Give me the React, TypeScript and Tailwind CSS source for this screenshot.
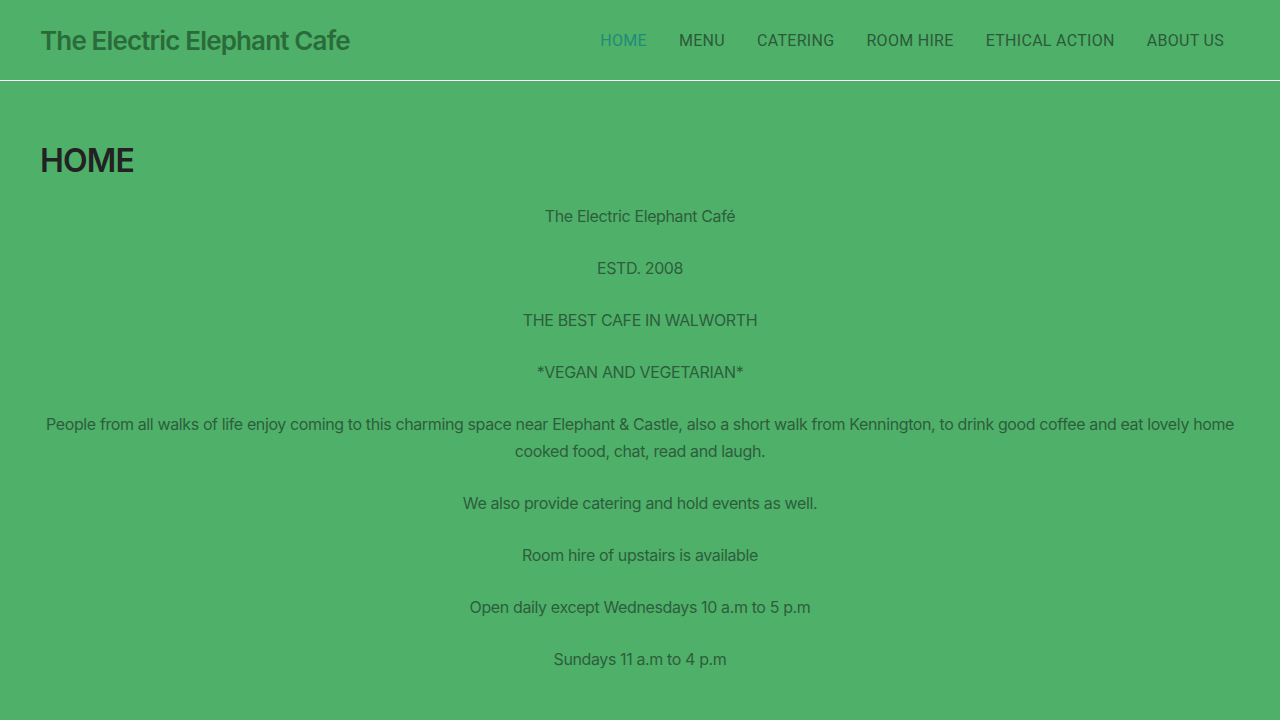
export default function App() {
  const nav = ["HOME", "MENU", "CATERING", "ROOM HIRE", "ETHICAL ACTION", "ABOUT US"];
  const paras = [
    "The Electric Elephant Café",
    "ESTD. 2008",
    "THE BEST CAFE IN WALWORTH",
    "*VEGAN AND VEGETARIAN*",
    "People from all walks of life enjoy coming to this charming space near Elephant & Castle, also a short walk from Kennington, to drink good coffee and eat lovely home cooked food, chat, read and laugh.",
    "We also provide catering and hold events as well.",
    "Room hire of upstairs is available",
    "Open daily except Wednesdays 10 a.m to 5 p.m",
    "Sundays 11 a.m to 4 p.m",
  ];
  return (
    <div className="min-h-[720px] bg-[#4fb06a]" style={{ fontFamily: "Inter, 'Noto Sans', sans-serif" }}>
      <header className="h-[81px] border-b border-white flex items-center justify-between pl-10 pr-10">
        <div className="text-[26px] font-semibold text-[#2a6b3a] tracking-[-0.85px]">The Electric Elephant Cafe</div>
        <nav className="flex items-center pt-[2px]">
          {nav.map((n, i) => (
            <a
              key={n}
              className={`px-4 text-[16px] tracking-[0.3px] ${i === 0 ? "text-[#1f8a78]" : "text-[#2b5a38]"}`}
              style={{ fontFamily: "Roboto, sans-serif" }}
            >
              {n}
            </a>
          ))}
        </nav>
      </header>
      <main className="px-10 pt-[60px]">
        <h1 className="text-[32px] font-semibold text-[#222222] leading-[40px] mb-[22px] tracking-[-0.8px]">HOME</h1>
        <div className="text-center text-[16px] leading-[27px] text-[#2d5e3b] tracking-[-0.38px]">
          {paras.map((p) => (
            <p key={p} className="mb-[25px]">{p}</p>
          ))}
        </div>
      </main>
    </div>
  );
}
